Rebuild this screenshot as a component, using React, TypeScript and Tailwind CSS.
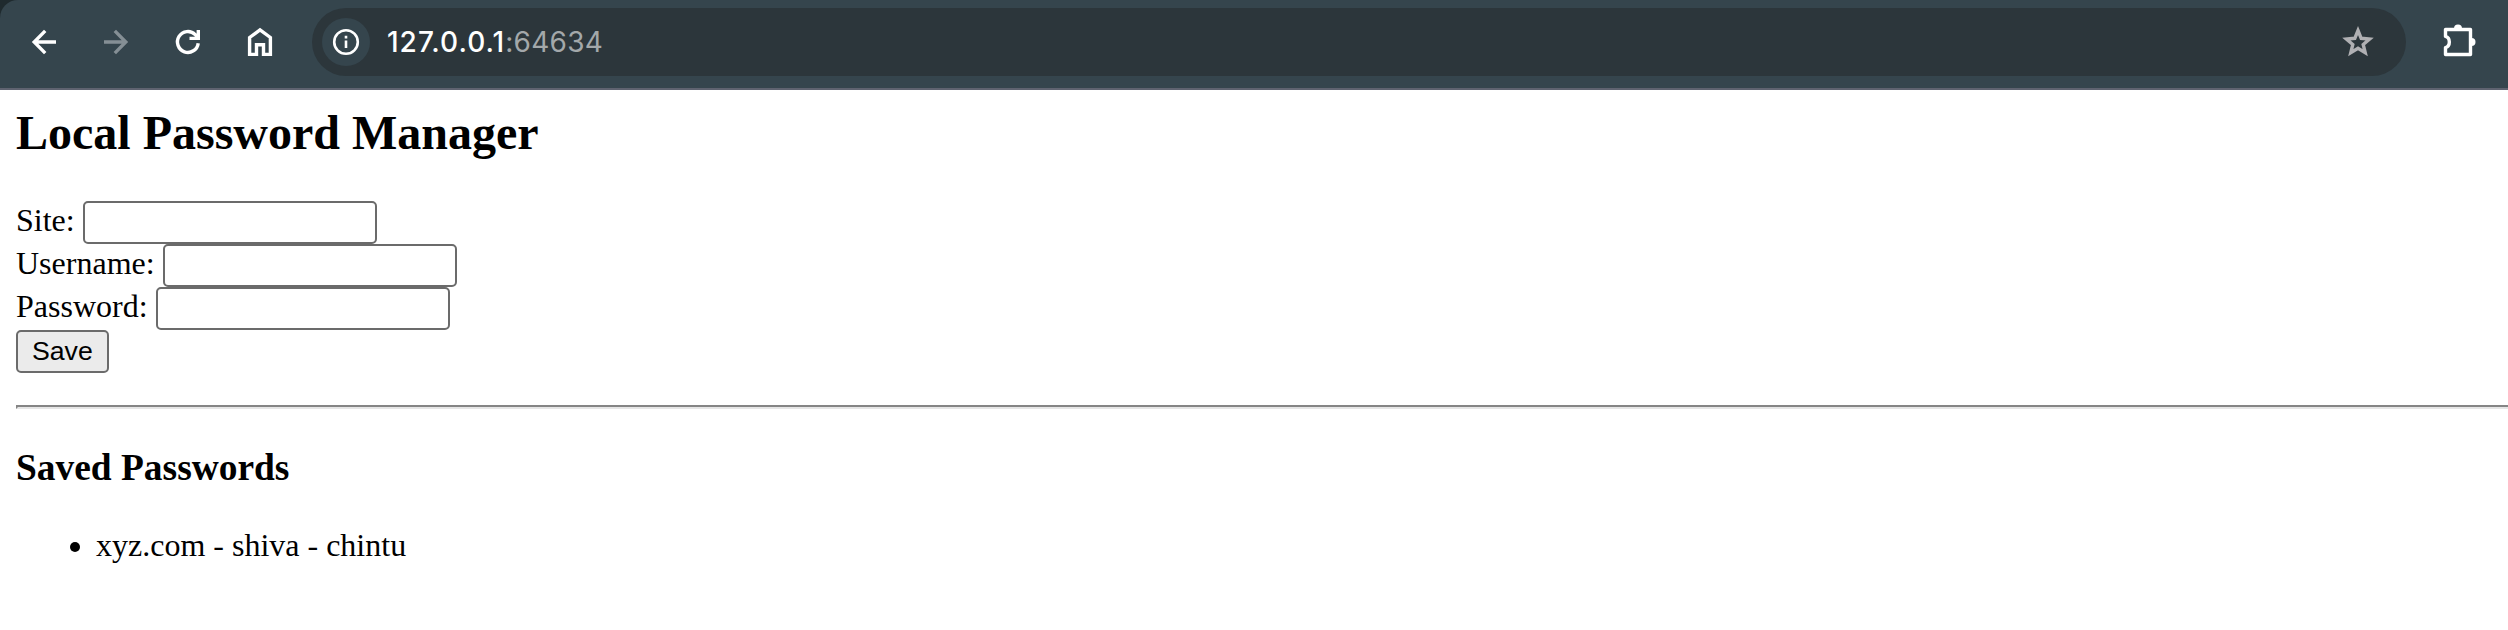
import type { ReactNode } from "react";

function Icon({ size, className, children }: { size: number; className?: string; children: ReactNode }) {
  return (
    <svg width={size} height={size} viewBox={`0 0 ${size} ${size}`} fill="none" stroke="currentColor" strokeWidth={3.4} className={className}>
      {children}
    </svg>
  );
}

function Toolbar() {
  return (
    <div className="h-[90px] bg-[#1f2a2e]">
      <header className="flex h-[90px] items-start rounded-tl-[18px] border-b-2 border-[#5f6370] bg-[#35454d] pt-2 text-white">
        <nav className="flex h-[68px] items-center gap-8 pl-6">
          <Icon size={40}>
            <path d="M32 20H10M21.2 8.9L10.2 20l11 11.1" />
          </Icon>
          <Icon size={40} className="text-[#858f95]">
            <path d="M8 20H30M18.8 8.9L29.8 20L18.8 31.1" />
          </Icon>
          <Icon size={40}>
            <path d="M30.2 21.2A10.4 10.4 0 1 1 27.2 12.6L30.5 16M30.3 8V16.4H21.5" />
          </Icon>
          <Icon size={40}>
            <path d="M9.6 32.4V15.5L20 7.9L30.4 15.5V32.4H23.5V22.8H16.5V32.4Z" />
          </Icon>
        </nav>
        <div className="ml-8 flex h-[68px] w-[2094px] items-center rounded-full bg-[#2c363b] pl-2.5">
          <div className="flex size-12 items-center justify-center rounded-full bg-[#35454d]">
            <Icon size={28}>
              <circle cx="14" cy="14" r="11.8" strokeWidth="2.6" />
              <path d="M14 12.4V20M14 7.8V10.4" strokeWidth="2.6" />
            </Icon>
          </div>
          <div className="ml-[17px] flex font-[Inter,sans-serif] text-[28px] leading-10">
            <span className="font-medium tracking-[1px]">127.0.0.1</span>
            <span className="tracking-[0.3px] text-[#a3a8aa]">:64634</span>
          </div>
          <Icon size={36} className="mr-[30px] ml-auto text-[#b0b0b3]">
            <path d="M18 6.5L21.2 14.3L29.6 15L23.2 20.5L25.2 28.6L18 24.3L10.8 28.6L12.8 20.5L6.4 15L14.8 14.3Z" />
          </Icon>
        </div>
        <div className="ml-[34px] flex h-[68px] items-center">
          <Icon size={40}>
            <path d="M5.5 14.4V7.5H30.5V32.5H5.5V25.6C10.6 24.2 10.6 15.8 5.5 14.4Z" strokeLinejoin="round" />
            <path d="M14 6.5a4 4 0 0 1 8 0ZM31.5 16a4 4 0 0 1 0 8Z" fill="currentColor" stroke="none" />
          </Icon>
        </div>
      </header>
    </div>
  );
}

function Field({ label, type = "text" }: { label: string; type?: string }) {
  return (
    <label className="flex h-[43px] items-start gap-2">
      <span className="leading-[39px]">{label}</span>
      <input type={type} className="h-[43px] w-[294px] rounded-[5px] border-2 border-[#6b6b6b] bg-white px-1 outline-none" />
    </label>
  );
}

export default function App() {
  return (
    <div className="h-[630px] overflow-hidden bg-white text-black">
      <Toolbar />
      <main className="pt-[15px] pl-4 font-['Liberation_Serif',serif] text-[32px]">
        <h2 className="text-[48px] leading-[56px] font-bold">Local Password Manager</h2>
        <form className="mt-10 flex flex-col items-start" onSubmit={(e) => e.preventDefault()}>
          <Field label="Site:" />
          <Field label="Username:" />
          <Field label="Password:" type="password" />
          <button className="flex h-[43px] items-start rounded-[5px] border-2 border-[#6b6b6b] bg-[#ebebeb] px-3.5 font-['Liberation_Sans',sans-serif] text-[26.67px] leading-[38px]">
            Save
          </button>
        </form>
        <hr className="mt-8 h-1 border-t-2 border-b-2 border-l-2 border-t-[#858585] border-b-[#e6e6e6] border-l-[#858585]" />
        <h3 className="mt-[37px] text-[37.44px] leading-[44px] font-bold">Saved Passwords</h3>
        <ul className="mt-[37px]">
          <li className="flex items-center pl-[54px] leading-9">
            <span className="mt-1 mr-4 size-2.5 rounded-full bg-black" />
            xyz.com - shiva - chintu
          </li>
        </ul>
      </main>
    </div>
  );
}
